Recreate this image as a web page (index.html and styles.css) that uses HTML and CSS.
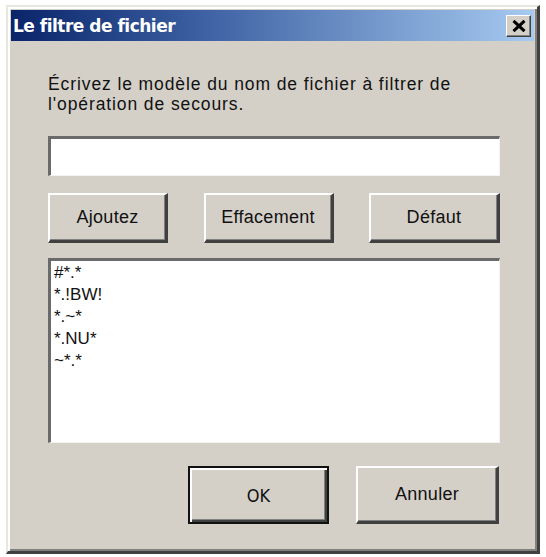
FILE: index.html
```html
<!DOCTYPE html>
<html lang="fr">
<head>
<meta charset="utf-8">
<title>Le filtre de fichier</title>
<link rel="stylesheet" href="styles.css">
</head>
<body>
<div class="window">
  <div class="titlebar">
    <span class="title">Le filtre de fichier</span>
    <button class="close" aria-label="Fermer">
      <svg width="14" height="12" viewBox="0 0 14 12"><path d="M1.5 0.8 L12.5 11.2 M12.5 0.8 L1.5 11.2" stroke="#000" stroke-width="3" fill="none"/></svg>
    </button>
  </div>
  <div class="content">
    <p class="label">Écrivez le modèle du nom de fichier à filtrer de<br>l'opération de secours.</p>
    <div class="input"></div>
    <div class="row">
      <button class="btn b1">Ajoutez</button>
      <button class="btn b2">Effacement</button>
      <button class="btn b3">Défaut</button>
    </div>
    <div class="list">
      <div class="item">#*.*</div>
      <div class="item">*.!BW!</div>
      <div class="item">*.~*</div>
      <div class="item">*.NU*</div>
      <div class="item">~*.*</div>
    </div>
    <div class="footer">
      <button class="btn ok"><span>OK</span></button>
      <button class="btn cancel">Annuler</button>
    </div>
  </div>
</div>
</body>
</html>
```
FILE: styles.css
```css
html, body {
  margin: 0;
  padding: 0;
  background: #ffffff;
}
body {
  padding: 5px 6px 4px 6px;
  font-family: "Liberation Sans", Arial, sans-serif;
}
.window {
  width: 534px;
  height: 549px;
  box-sizing: border-box;
  background: #d4d0c8;
  border-style: solid;
  border-width: 2px 3px 3px 2px;
  border-color: #e8e6e0 #404040 #404040 #e8e6e0;
  box-shadow: inset 2px 2px 0 #ffffff, inset -2px -2px 0 #808080;
  padding: 3px 3px 0 3px;
  display: flex;
  flex-direction: column;
}
.titlebar {
  height: 31px;
  background: linear-gradient(to right, #0a246a 0%, #3a5ea0 35%, #a6caf0 100%);
  display: flex;
  align-items: center;
  justify-content: space-between;
  padding: 0 3px 0 2px;
}
.title {
  color: #ffffff;
  font-family: "DejaVu Sans", Tahoma, sans-serif;
  font-weight: bold;
  font-size: 17px;
  letter-spacing: -0.5px;
}
.close {
  width: 25px;
  height: 22px;
  padding: 0;
  background: #d4d0c8;
  border-style: solid;
  border-width: 1px;
  border-color: #ffffff #404040 #404040 #ffffff;
  box-shadow: inset -1px -1px 0 #808080;
  display: flex;
  align-items: center;
  justify-content: center;
}
.content {
  padding: 33px 34px 0 37px;
  display: flex;
  flex-direction: column;
}
.label {
  margin: 0;
  font-size: 17.5px;
  line-height: 20px;
  color: #111;
  letter-spacing: 0.9px;
}
.input {
  margin-top: 22px;
  height: 40px;
  box-sizing: border-box;
  background: #ffffff;
  border-style: solid;
  border-width: 3px 1px 1px 3px;
  border-color: #6a6a6a #f4f3ef #f4f3ef #6a6a6a;
}
.row {
  margin-top: 17px;
  display: flex;
  justify-content: space-between;
}
.btn {
  font-family: "Liberation Sans", Arial, sans-serif;
  font-size: 18px;
  color: #111;
  background: #d4d0c8;
  border-style: solid;
  border-width: 2px 3px 3px 2px;
  border-color: #ffffff #404040 #404040 #ffffff;
  box-shadow: inset -1px -1px 0 #808080;
  padding: 0;
  height: 50px;
  letter-spacing: 0.3px;
}
.b1 { width: 120px; }
.b2 { width: 130px; }
.b3 { width: 131px; }
.list {
  margin-top: 15px;
  height: 185px;
  box-sizing: border-box;
  background: #ffffff;
  border-style: solid;
  border-width: 3px 1px 1px 3px;
  border-color: #6a6a6a #f4f3ef #f4f3ef #6a6a6a;
  padding: 1px 3px;
}
.item {
  font-size: 17px;
  line-height: 22px;
  color: #111;
}
.footer {
  margin-top: 23px;
  display: flex;
  justify-content: flex-end;
  gap: 27px;
  padding-right: 1px;
}
.footer .btn {
  height: 58px;
}
.ok {
  width: 141px;
  border: 2px solid #111;
  box-shadow: inset 2px 2px 0 #ffffff, inset -2px -2px 0 #404040, inset -3px -3px 0 #808080;
  font-family: "DejaVu Sans Condensed", "DejaVu Sans", sans-serif;
  font-size: 18px;
  letter-spacing: 0;
}
.cancel {
  width: 143px;
}
```
